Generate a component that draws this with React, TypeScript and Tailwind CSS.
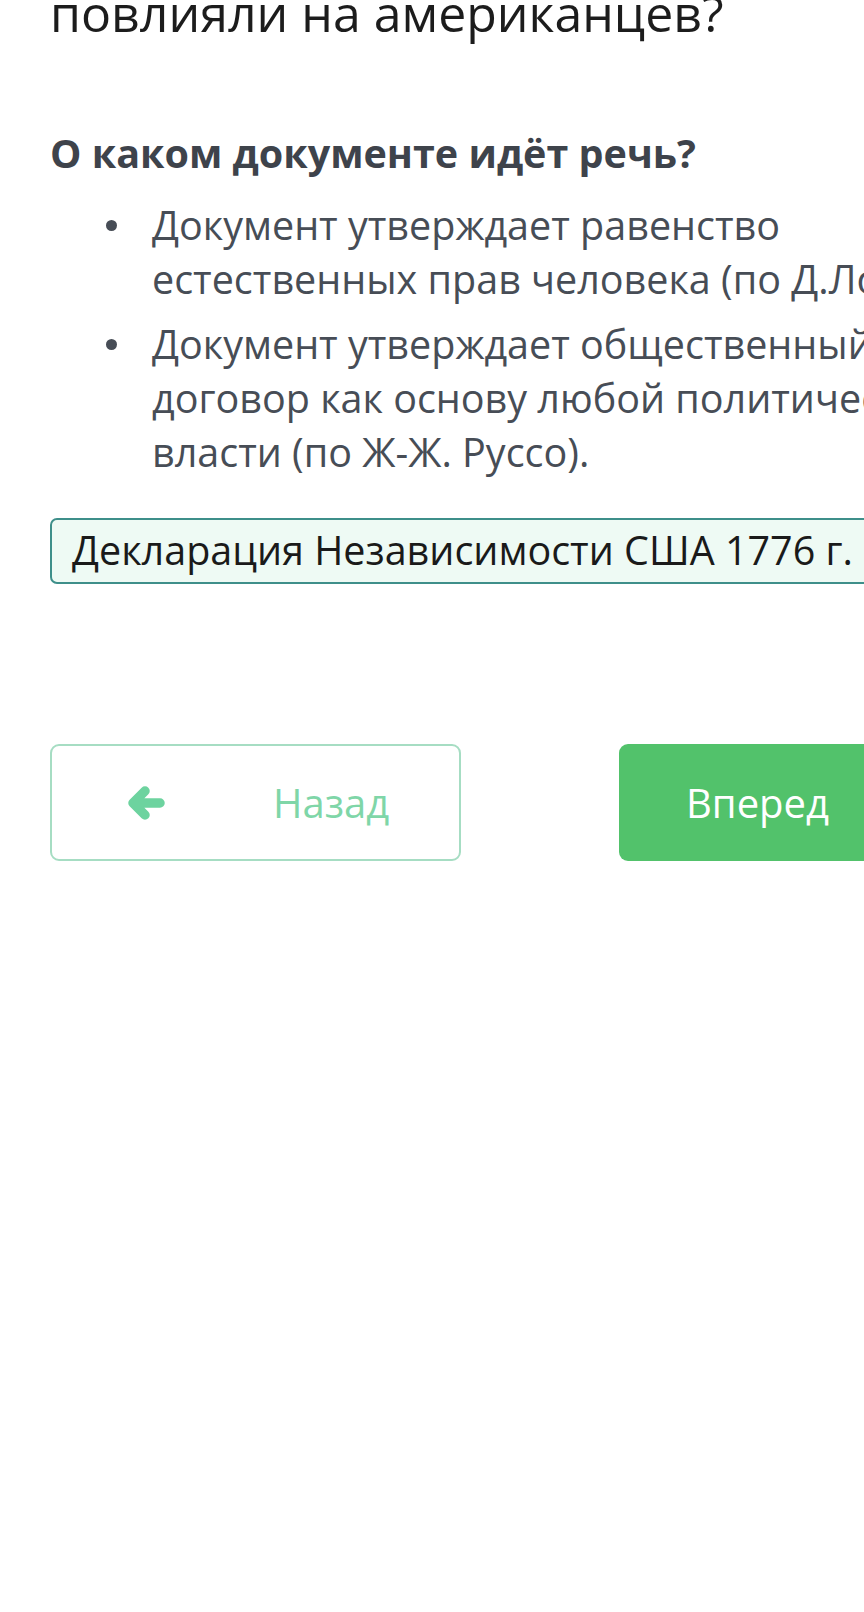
import React from "react";

function Bullet({ lines }: { lines: string[] }) {
  return (
    <li className="flex">
      <span className="w-[102px] shrink-0 flex justify-center pl-[20px]">
        <span className="mt-[22px] w-[11px] h-[11px] rounded-full bg-[#474d56]" />
      </span>
      <span className="flex flex-col whitespace-nowrap">
        {lines.map((l, i) => (
          <span key={i}>{l}</span>
        ))}
      </span>
    </li>
  );
}

function ArrowLeft() {
  return (
    <svg width="40" height="38" viewBox="0 0 40 38" className="shrink-0">
      <path
        d="M34 19 H9 M19 7 L7 19 L19 31"
        fill="none"
        stroke="#6dd39f"
        strokeWidth="9.5"
        strokeLinecap="round"
        strokeLinejoin="round"
      />
    </svg>
  );
}

export default function App() {
  return (
    <div
      className="w-[864px] h-[1612px] overflow-hidden bg-white"
      style={{ fontFamily: '"Open Sans", "Noto Sans", sans-serif' }}
    >
      <div className="w-[1100px] px-[50px]">
        <h1 className="mt-[-18px] text-[50px] leading-[62px] text-[#1c1c1c] font-normal whitespace-nowrap">
          повлияли на американцев?
        </h1>
        <p className="mt-[82px] text-[39.5px] leading-[54px] font-bold text-[#3e434b] whitespace-nowrap">
          О каком документе идёт речь?
        </p>
        <ul className="mt-[18px] flex flex-col gap-[11px] text-[39.5px] leading-[54px] text-[#474d56]">
          <Bullet
            lines={[
              "Документ утверждает равенство",
              "естественных прав человека (по Д.Локка).",
            ]}
          />
          <Bullet
            lines={[
              "Документ утверждает общественный",
              "договор как основу любой политической",
              "власти (по Ж-Ж. Руссо).",
            ]}
          />
        </ul>
        <div className="mt-[39px] w-[1000px] h-[66px] rounded-[7px] border-2 border-[#3e8f8a] bg-[#eefaf4] flex items-center px-[20px] text-[39.5px] text-[#1a1a1a] whitespace-nowrap">
          Декларация Независимости США 1776 г.
        </div>
        <div className="mt-[160px] flex gap-[158px]">
          <button className="w-[411px] h-[117px] shrink-0 rounded-[9px] border-2 border-[#a6ddc3] bg-white flex items-center pl-[74px] text-[40px] text-[#7fd6a8]">
            <ArrowLeft />
            <span className="ml-[107px]">Назад</span>
          </button>
          <button className="w-[411px] h-[117px] shrink-0 rounded-[9px] bg-[#52c26b] flex items-center pl-[67px] text-[40px] text-white">
            Вперед
          </button>
        </div>
      </div>
    </div>
  );
}
